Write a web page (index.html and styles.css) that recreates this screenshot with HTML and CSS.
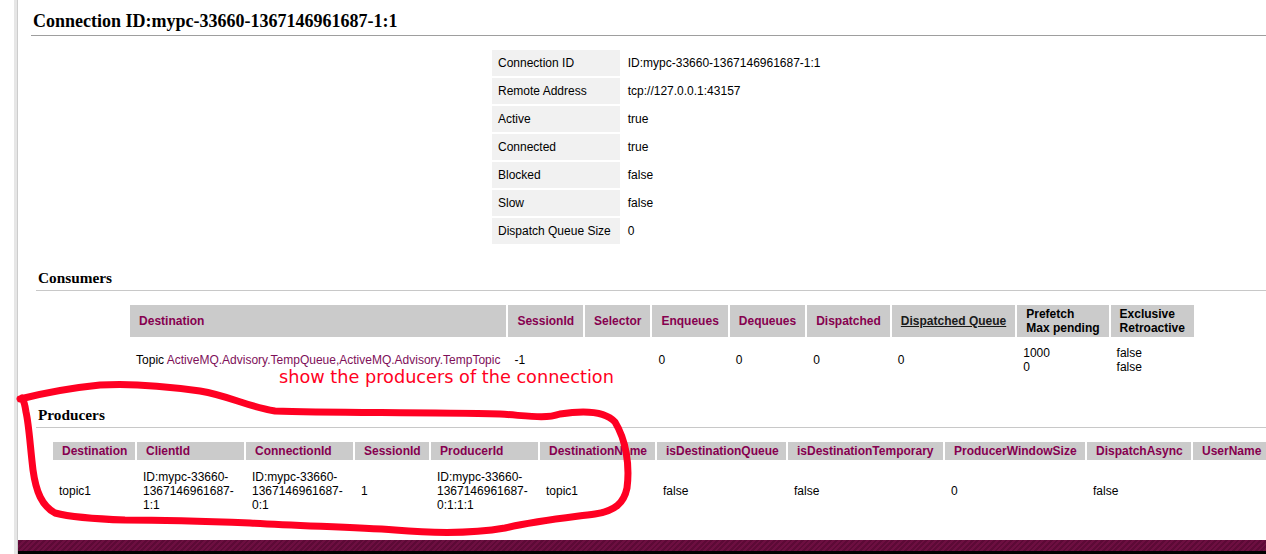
FILE: index.html
```html
<!DOCTYPE html>
<html>
<head>
<meta charset="utf-8">
<title>Connection</title>
<link rel="stylesheet" href="styles.css">
</head>
<body>
<div class="frame">
  <div class="main">
    <div class="content">
      <h1 class="title">Connection ID:mypc-33660-1367146961687-1:1</h1>

      <table class="info">
        <tr><th>Connection ID</th><td>ID:mypc-33660-1367146961687-1:1</td></tr>
        <tr><th>Remote Address</th><td>tcp://127.0.0.1:43157</td></tr>
        <tr><th>Active</th><td>true</td></tr>
        <tr><th>Connected</th><td>true</td></tr>
        <tr><th>Blocked</th><td>false</td></tr>
        <tr><th>Slow</th><td>false</td></tr>
        <tr><th>Dispatch Queue Size</th><td>0</td></tr>
      </table>

      <section class="section">
        <h2 class="section-title">Consumers</h2>
        <table class="grid consumers">
          <thead>
            <tr>
              <th><a class="sort" href="#">Destination</a></th>
              <th><a class="sort" href="#">SessionId</a></th>
              <th><a class="sort" href="#">Selector</a></th>
              <th><a class="sort" href="#">Enqueues</a></th>
              <th><a class="sort" href="#">Dequeues</a></th>
              <th><a class="sort" href="#">Dispatched</a></th>
              <th><a class="plain-link" href="#">Dispatched Queue</a></th>
              <th class="dark">Prefetch<br>Max pending</th>
              <th class="dark">Exclusive<br>Retroactive</th>
            </tr>
          </thead>
          <tbody>
            <tr>
              <td>Topic <a class="dest" href="#">ActiveMQ.Advisory.TempQueue,ActiveMQ.Advisory.TempTopic</a></td>
              <td>-1</td>
              <td></td>
              <td>0</td>
              <td>0</td>
              <td>0</td>
              <td>0</td>
              <td>1000<br>0</td>
              <td>false<br>false</td>
            </tr>
          </tbody>
        </table>
      </section>

      <section class="section">
        <h2 class="section-title">Producers</h2>
        <table class="grid producers">
          <thead>
            <tr>
              <th class="c-dest"><a class="sort" href="#">Destination</a></th>
              <th class="c-id"><a class="sort" href="#">ClientId</a></th>
              <th class="c-id"><a class="sort" href="#">ConnectionId</a></th>
              <th class="c-sess"><a class="sort" href="#">SessionId</a></th>
              <th class="c-id"><a class="sort" href="#">ProducerId</a></th>
              <th class="c-dname"><a class="sort" href="#">DestinationName</a></th>
              <th class="c-isq"><a class="sort" href="#">isDestinationQueue</a></th>
              <th class="c-ist"><a class="sort" href="#">isDestinationTemporary</a></th>
              <th class="c-win"><a class="sort" href="#">ProducerWindowSize</a></th>
              <th class="c-async"><a class="sort" href="#">DispatchAsync</a></th>
              <th class="c-user"><a class="sort" href="#">UserName</a></th>
            </tr>
          </thead>
          <tbody>
            <tr>
              <td>topic1</td>
              <td>ID:mypc-33660-<wbr>1367146961687-<wbr>1:1</td>
              <td>ID:mypc-33660-<wbr>1367146961687-<wbr>0:1</td>
              <td>1</td>
              <td>ID:mypc-33660-<wbr>1367146961687-<wbr>0:1:1:1</td>
              <td>topic1</td>
              <td>false</td>
              <td>false</td>
              <td>0</td>
              <td>false</td>
              <td></td>
            </tr>
          </tbody>
        </table>
      </section>
    </div>
    <div class="footer"></div>
    <div class="footer-base"></div>
  </div>

  <div class="note">show the producers of the connection</div>
  <svg class="loop" width="1266" height="554" viewBox="0 0 1266 554" aria-hidden="true">
    <path d="M20 399 C 40 394, 70 388, 100 385 C 130 383, 165 386, 200 391 C 230 396, 245 406, 275 411 C 330 413, 420 412, 500 414 C 530 416, 545 419, 560 414 C 585 410, 605 411, 615 422 C 626 440, 630 465, 627 488 C 624 503, 615 511, 595 514 C 565 518, 535 521, 505 528 C 470 534, 430 533, 395 530 C 350 527, 300 526, 250 523 C 200 521, 160 520, 125 520 C 95 519, 70 517, 55 513 C 42 506, 36 492, 33 470 C 30 445, 29 425, 26 412 C 25 405, 24 401, 22 398"
      fill="none" stroke="#ff0022" stroke-width="7" stroke-linecap="round" stroke-linejoin="round"/>
  </svg>
</div>
</body>
</html>
```

FILE: styles.css
```css
html, body {
  margin: 0;
  padding: 0;
  overflow: hidden;
  background: #fff;
}

body {
  font-family: "Liberation Sans", Arial, sans-serif;
  font-size: 12px;
  color: #000;
}

.frame {
  position: relative;
  display: flow-root;
  margin-left: 14px;
  border-left: 3px solid #e6e6e6;
}

.main {
  display: flow-root;
  border-left: 1px solid #cdcdcd;
}

.content {
  margin-left: 13px;
  width: 1262px;
  padding-bottom: 18px;
}

.title {
  margin: 10px 0 0;
  padding: 0 0 3px 2px;
  font: bold 18px/22px "Liberation Serif", "Times New Roman", serif;
  border-bottom: 1px solid #9e9e9e;
}

.info {
  margin: 12px 0 0 459px;
  border-spacing: 2px;
}

.info th {
  background: #f1f1f1;
  font-weight: normal;
  text-align: left;
  padding: 6px 9px 6px 6px;
  line-height: 14px;
  white-space: nowrap;
}

.info td {
  padding: 6px;
  line-height: 14px;
  white-space: nowrap;
}

.section {
  margin-left: 5px;
  width: 1252px;
}

.section-title {
  margin: 23px 0 0;
  padding: 0 0 3px 2px;
  font: bold 15.3px/18px "Liberation Serif", "Times New Roman", serif;
  border-bottom: 1px solid #c8c8c8;
}

.grid {
  border-spacing: 2px;
}

.grid th {
  background: #cbcbcb;
  text-align: left;
  padding: 2px 9px;
  line-height: 14px;
  font-weight: bold;
  white-space: nowrap;
  vertical-align: middle;
}

.grid td {
  line-height: 14px;
  vertical-align: middle;
  text-align: left;
}

.consumers {
  margin: 12px auto 0;
}

.consumers td {
  padding: 7px 6px;
  white-space: nowrap;
}

.producers {
  margin: 12px 0 0 15px;
  table-layout: fixed;
  width: 1224px;
}

.producers th,
.producers td {
  box-sizing: border-box;
}

.producers td {
  padding: 8px 6px;
}

.c-dest { width: 82px; }
.c-id { width: 107px; }
.c-sess { width: 74px; }
.c-dname { width: 115px; }
.c-isq { width: 129px; }
.c-ist { width: 155px; }
.c-win { width: 140px; }
.c-async { width: 104px; }
.c-user { width: 80px; }

a.sort {
  color: #86004f;
  text-decoration: none;
}

a.plain-link {
  color: #1a1a1a;
  text-decoration: underline;
}

.grid th.dark {
  color: #000;
}

a.dest {
  color: #7e1059;
  text-decoration: none;
}

.footer {
  height: 11px;
  background: repeating-linear-gradient(135deg, #6d0f41 0, #6d0f41 2px, #5c0a36 2px, #5c0a36 4px);
}

.footer-base {
  height: 20px;
  background: #000;
}

.note {
  position: absolute;
  left: 262px;
  top: 367px;
  font-family: "DejaVu Sans", sans-serif;
  font-size: 17.7px;
  line-height: 20px;
  color: #ff0022;
  white-space: nowrap;
}

.loop {
  position: absolute;
  left: -17px;
  top: 0;
  pointer-events: none;
}
```
